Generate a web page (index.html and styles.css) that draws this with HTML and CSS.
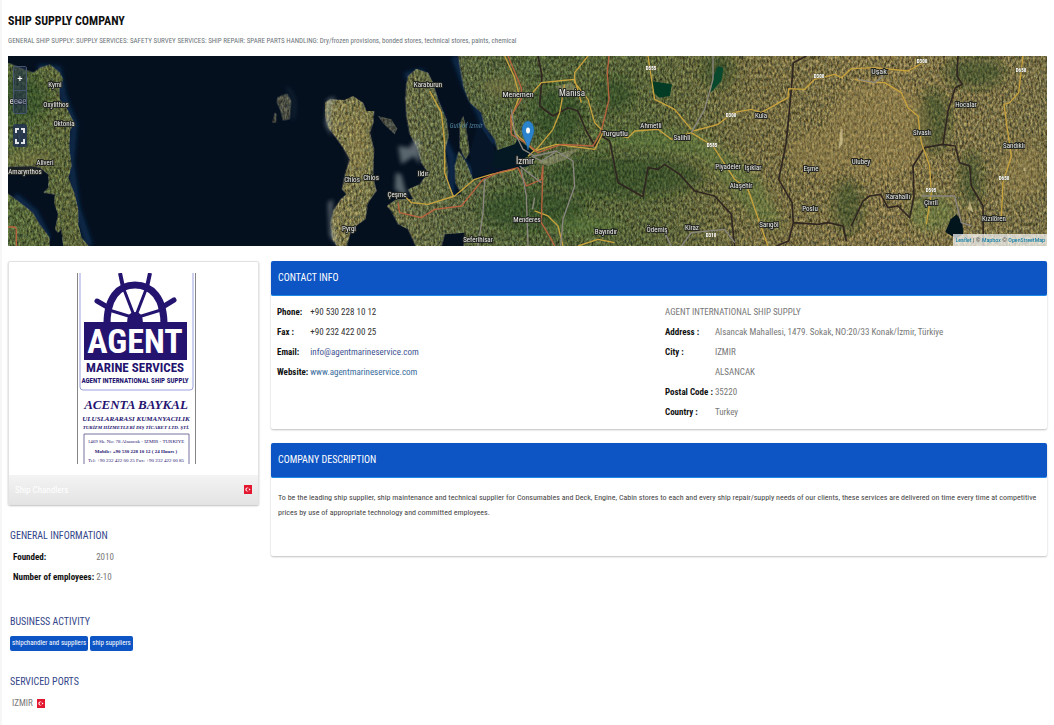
FILE: index.html
```html
<!DOCTYPE html>
<html lang="en">
<head>
<meta charset="utf-8">
<title>Ship Supply Company</title>
<link rel="stylesheet" href="styles.css">
</head>
<body>
<main class="page">
  <header class="intro">
    <h1 class="title">SHIP SUPPLY COMPANY</h1>
    <p class="subtitle">GENERAL SHIP SUPPLY: SUPPLY SERVICES: SAFETY SURVEY SERVICES: SHIP REPAIR: SPARE PARTS HANDLING: Dry/frozen provisions, bonded stores, technical stores, paints, chemical</p>
  </header>

  <section class="map" aria-label="Map">
    <svg class="map-art" viewBox="0 0 1039 190" preserveAspectRatio="xMidYMid slice">
      <defs>
        <linearGradient id="land" gradientUnits="userSpaceOnUse" x1="0" y1="0" x2="3117" y2="0">
          <stop offset="0" stop-color="#4f6139"/><stop offset=".1" stop-color="#5c603b"/>
          <stop offset=".32" stop-color="#77734c"/><stop offset=".42" stop-color="#566040"/>
          <stop offset=".5" stop-color="#4c5c38"/><stop offset=".62" stop-color="#545e39"/>
          <stop offset=".72" stop-color="#6d6742"/><stop offset=".85" stop-color="#786d47"/><stop offset="1" stop-color="#6e6845"/>
        </linearGradient>
        <filter id="terrain" x="0" y="0" width="100%" height="100%" color-interpolation-filters="sRGB">
          <feTurbulence type="fractalNoise" baseFrequency=".16 .09" numOctaves="4" seed="8" result="n"/>
          <feColorMatrix in="n" values=".8 .3 0 0 -.02  .8 .15 0 0 .05  .8 0 .2 0 0  0 0 0 0 1" result="g"/>
          <feBlend in="g" in2="SourceGraphic" mode="overlay" result="b"/>
          <feComposite in="b" in2="SourceAlpha" operator="in"/>
        </filter>
        <filter id="soft" x="-30%" y="-30%" width="160%" height="160%"><feGaussianBlur stdDeviation="14"/></filter>
        <filter id="haze" x="-30%" y="-30%" width="160%" height="160%"><feGaussianBlur stdDeviation="6"/></filter>
      </defs>
      <rect width="1039" height="190" fill="#05101f"/>
      <g transform="scale(.33333)">
        <!-- shallow water -->
        <g fill="none" stroke="#0a2a4c" stroke-width="20" filter="url(#haze)">
          <path d="M90 35 L150 40 L165 120 L198 205 L188 320 L205 450 L245 570M20 420L80 470L120 550"/>
          <path d="M1340 0L1370 80L1420 180L1440 250L1530 270M1290 220L1330 300L1330 420M1350 300L1400 360M1190 60L1240 50L1310 210"/>
        </g>
        <g filter="url(#terrain)" fill="url(#land)">
          <path d="M0 20L36 35L76 50L96 35L126 25L156 50L166 70L154 95L156 130L181 165L198 200L186 225L184 275L191 330L181 365L201 415L211 465L211 505L221 545L246 575L166 575L160 520L150 530L141 520L150 475L138 440L141 415L106 410L121 395L121 355L96 335L70 330L0 333Z"/>
          <path d="M0 413L30 435L75 470L92 500L125 545L125 575L0 575Z"/>
          <path opacity=".6" d="M808 125L820 118L838 113L850 135L845 190L825 193L816 160L806 140ZM800 170L806 175L803 200L793 200Z"/>
          <path d="M950 140L966 130L1010 132L1035 120L1065 140L1075 165L1098 165L1096 200L1085 230L1098 280L1095 360L1105 405L1080 440L1072 490L1030 520L1015 575L990 575L972 550L967 500L975 465L998 430L1015 415L1002 400L1012 350L1025 310L1005 275L980 240L960 215L950 175Z"/>
          <path opacity=".6" d="M1110 180L1150 190L1168 218L1160 235L1128 205Z"/>
          <path d="M1195 85L1200 60L1225 38L1260 50L1275 80L1290 130L1315 190L1322 240L1310 285L1320 340L1318 380L1338 420L1360 415L1342 380L1340 330L1352 285L1375 320L1395 370L1430 370L1480 345L1550 333L1510 310L1470 290L1460 250L1430 210L1420 170L1385 140L1367 95L1355 30L1350 0L3140 0L3140 590L1365 590L1370 530L1310 535L1300 575L1225 575L1200 520L1170 505L1150 465L1136 450L1165 430L1215 430L1200 400L1235 385L1260 350L1240 320L1225 270L1205 235L1195 180L1192 130Z"/>
          <path d="M1355 210L1365 180L1373 210L1385 290L1372 310L1355 275Z"/>
        </g>
        <!-- inner bay -->
        <path d="M1395 365L1385 290L1410 200L1450 260L1465 290L1520 285L1555 270L1545 325L1485 342Z" fill="#061527"/>
        <path d="M1460 285L1520 265L1530 250L1575 285L1550 255L1585 285L1545 310L1565 330L1500 340L1450 330Z" fill="#031823"/>
        <!-- woods and dry ground -->
        <g filter="url(#soft)">
          <g fill="#203f1c" opacity=".4">
            <ellipse cx="1570" cy="460" rx="160" ry="60"/><ellipse cx="1650" cy="175" rx="75" ry="85"/><ellipse cx="1820" cy="115" rx="55" ry="50"/>
            <ellipse cx="1850" cy="360" rx="240" ry="60"/><ellipse cx="2900" cy="50" rx="90" ry="45"/><ellipse cx="2775" cy="195" rx="50" ry="95"/>
            <ellipse cx="2890" cy="370" rx="32" ry="85"/><ellipse cx="2520" cy="450" rx="45" ry="80"/><ellipse cx="40" cy="130" rx="80" ry="70"/><ellipse cx="2130" cy="40" rx="45" ry="55"/>
          </g>
          <g fill="#57823c" opacity=".36">
            <path d="M1760 220L2060 225L2250 360L2330 520L2240 490L2080 300L1760 260Z"/><ellipse cx="1730" cy="510" rx="110" ry="25"/><ellipse cx="2770" cy="470" rx="70" ry="55"/>
          </g>
          <g fill="#a28a50" opacity=".3">
            <ellipse cx="2610" cy="220" rx="150" ry="145"/><ellipse cx="2430" cy="290" rx="90" ry="70"/><ellipse cx="3040" cy="340" rx="65" ry="90"/><ellipse cx="60" cy="310" rx="80" ry="25"/><ellipse cx="1050" cy="260" rx="25" ry="90"/><ellipse cx="1490" cy="95" rx="65" ry="28"/>
          </g>
        </g>
        <!-- cloud banks and lakes -->
        <g fill="#a1adae" opacity=".55" filter="url(#haze)">
          <path d="M958 130L982 122L966 160L970 240L952 205ZM960 440L974 430L972 510L990 570L965 540ZM1163 350L1180 355L1198 425L1160 400ZM1170 270L1205 275L1220 250L1235 255L1235 325L1218 300L1180 325Z"/>
          <path d="M836 95Q870 120 855 190" fill="none" stroke="#33556b" stroke-width="5"/>
        </g>
        <path d="M1928 75L1992 85L1985 120L1955 125L1936 110Z" fill="#033b25"/>
        <path d="M2130 30L2146 35L2140 75L2108 110L2116 60Z" fill="#08492e"/>
        <path d="M2846 475L2863 500L2866 535L2845 548L2812 528L2828 490Z" fill="#02141c"/>
        <path d="M2492 280l6-60 6 0v42zM2885 435l12 35-18-12zM3046 335h6v10h-6z" fill="#d4c693" opacity=".75"/>
        <path d="M1640 90l50-8 20 20-45 12zM1590 320l55-25 70-20-40 35-55 20z" fill="#aaa386" opacity=".45"/>
        <!-- borders -->
        <g fill="none" stroke="#302621" stroke-width="5" stroke-linejoin="round">
          <path d="M1590 0L1602 60L1595 150L1635 180L1680 155L1710 165L1735 225L1760 270L1780 240L1805 255L1830 380L1905 422L1920 335L1950 340L1970 325L2015 355L2060 405L2120 420L2170 475L2180 570"/>
          <path d="M2395 0L2356 20L2350 100L2335 260L2312 370L2352 440L2356 500L2342 555L2305 570M2356 500L2430 505L2460 500L2505 510L2515 555M2530 510L2565 435L2585 420L2618 415L2640 455L2670 450L2705 485L2718 420L2715 330L2750 275L2805 265L2842 270L2855 320L2885 330L2890 390L2925 450L2926 570M2850 0L2847 60L2863 85L2842 95L2820 165L2805 265"/>
        </g>
        <!-- roads -->
        <g fill="none" stroke="#c9a33d" stroke-width="4" stroke-linejoin="round">
          <path d="M1490 0L1518 60L1535 120L1508 190L1525 235L1580 285L1645 265L1760 280L1785 230L1860 245L1880 225L1950 220L1990 250L2050 230L2115 270L2180 370L2220 400L2255 500L2280 570M1565 120L1600 80L1650 75L1700 70L1720 140M1670 85L1655 170L1635 220L1590 275L1560 300M1740 0L1700 50L1700 80L1740 130L1760 200L1785 225M1920 0L1940 130L2000 160L2050 220M2056 225L2130 205L2175 170L2230 160L2260 170L2340 125L2342 98L2390 100L2420 70L2480 55L2500 65L2530 38L2600 35L2700 45L2745 20M2540 70L2590 80L2630 80L2680 110L2700 155L2730 180L2740 260L2765 330L2770 410L2755 505M3045 0L3032 110L3005 140L2988 145L2998 220L3010 300L2985 380L2980 490M1180 410L1210 440L1260 445L1340 420L1400 370L1450 355L1520 340M1265 105L1300 170L1310 260L1310 350L1335 420M1580 465L1620 480L1650 510L1665 570M1710 570L1770 550L1820 560"/>
        </g>
        <g fill="none" stroke="#b9623f" stroke-width="4" stroke-linejoin="round">
          <path d="M1500 0L1540 95L1540 130L1508 180L1510 235L1560 265L1590 290L1660 265L1755 270L1780 225L1803 130L1798 50L1803 0M1170 440L1175 470L1240 485L1280 460L1360 450L1425 370L1470 350L1530 335L1555 390L1600 370L1605 330L1600 500L1630 550L1640 570M0 513H18Q25 513 25 525V570"/>
        </g>
        <g fill="none" stroke="#8b8781" stroke-width="4" stroke-linejoin="round">
          <path d="M1510 160L1520 230L1545 280L1580 300L1645 285L1695 315L1700 390L1665 490L1658 570M1540 340L1555 420L1560 570M1535 330L1600 380M1430 370L1425 470L1410 570M1570 300L1600 315L1640 290M1970 530L1990 570M2020 570L2050 530L2150 520L2180 560M2050 230L2090 160L2115 70L2115 0M2550 70L2600 80L2625 60M2740 420L2840 420L2860 500L2890 510M1580 425L1573 460"/>
        </g>
      </g>
      <g class="places">
        <text x="47" y="31">Kymi</text><text x="48" y="51">Oxylithos</text><text x="56" y="70">Oktonia</text><text x="37" y="109">Aliveri</text><text x="17" y="118">Amarynthos</text><text x="10" y="48" class="big">eece</text>
        <text x="344" y="126">Chios</text><text x="363" y="124">Chios</text><text x="341" y="175">Pyrgi</text>
        <text x="420" y="31">Karaburun</text><text x="458" y="72" class="sea">Gulf of Izmir</text><text x="415" y="120">Ildır</text><text x="389" y="141">Çeşme</text><text x="470" y="186">Seferihisar</text>
        <text x="510" y="41" class="mid">Menemen</text><text x="564" y="40" class="big">Manisa</text><text x="517" y="108" class="big">İzmir</text><text x="519" y="166">Menderes</text><text x="607" y="80" class="mid">Turgutlu</text><text x="643" y="72">Ahmetli</text><text x="674" y="84">Salihli</text>
        <text x="598" y="178">Bayındır</text><text x="649" y="176">Ödemiş</text><text x="684" y="174">Kiraz</text><text x="753" y="62">Kula</text><text x="720" y="113">Piyadeler</text><text x="745" y="114">Işıklar</text><text x="733" y="132">Alaşehir</text><text x="761" y="171">Sarıgöl</text>
        <text x="803" y="115">Eşme</text><text x="802" y="155">Poslu</text><text x="853" y="108">Ulubey</text><text x="871" y="18" class="mid">Uşak</text><text x="914" y="79">Sivaslı</text><text x="890" y="143">Karahallı</text><text x="923" y="149">Çivril</text><text x="958" y="51">Hocalar</text><text x="1006" y="92">Sandıklı</text><text x="986" y="165">Kızılören</text>
      </g>
      <g class="roads">
        <text x="643" y="14">D555</text><text x="704" y="91">D585</text><text x="723" y="61">D300</text><text x="811" y="22">D300</text><text x="914" y="7">D300</text><text x="1013" y="16">D650</text><text x="996" y="124">D650</text><text x="923" y="136">D595</text><text x="703" y="181">D310</text>
      </g>
      <path d="M520 94C518 84 514 80 514 74a6 9 0 0 1 12 0c0 6-4 10-6 20z" fill="#2b83cb" stroke="#246ba8" stroke-width=".5"/>
      <ellipse cx="520" cy="74.500" rx="2" ry="3" fill="#fff"/>
    </svg>
    <div class="map-tools">
      <div class="zoom"><button class="tool" aria-label="Zoom in">+</button><button class="tool" aria-label="Zoom out">−</button></div>
      <button class="tool full" aria-label="Full screen"><svg width="10" height="16" viewBox="0 0 10 16" fill="none" stroke="#e2e5ea" stroke-width="2"><path d="M1 5V1H4M6 1H9V5M9 11V15H6M4 15H1V11"/></svg></button>
    </div>
    <div class="credit"><a href="#">Leaflet</a> | © <a href="#">Mapbox</a> © <a href="#">OpenStreetMap</a></div>
  </section>

  <div class="columns">
    <aside class="side">
      <div class="card">
        <svg class="logo" viewBox="0 0 120 191" role="img" aria-label="Agent Marine Services">
          <path d="M.5 0V191M118.500 0V191" stroke="#858585"/>
          <path d="M3 0V114Q3 117 6 117H113Q116 117 116 114V0" fill="none" stroke="#9aa0dc"/>
          <g fill="none" stroke="#24136f">
            <path d="M30 55C29 24 42 12 58 12S88 24 87 55" stroke-width="7"/>
            <path d="M46 14L43 0M70 14L73 0" stroke-width="4"/>
            <path d="M32 35L20 28M84 35L97 27" stroke-width="5" stroke-linecap="round"/>
            <path d="M58 45L32 37M58 45L46 14M58 45L70 14M58 45L84 37" stroke-width="3"/>
          </g>
          <path d="M50 50Q50 39 58 39T66 50Z" fill="#24136f"/>
          <rect x="7" y="49" width="103" height="38" fill="#24136f"/>
          <g class="logo-sans">
            <text class="l-agent" x="58" y="80">AGENT</text><text class="l-marine" x="58" y="99">MARINE SERVICES</text><text class="l-intl" x="58" y="110">AGENT INTERNATIONAL SHIP SUPPLY</text>
          </g>
          <g class="logo-serif">
            <text class="l-acenta" x="59" y="136">ACENTA BAYKAL</text><text class="l-ulus" x="59" y="148">ULUSLARARASI KUMANYACILIK</text><text class="l-tur" x="59" y="156">TURİZM HİZMETLERİ DIŞ TİCARET LTD. ŞTİ.</text>
          </g>
          <path d="M7 191V161H112V191" fill="none" stroke="#77729d"/>
          <g class="logo-addr"><text x="59" y="170">1469 Sk. No: 78 Alsancak - IZMIR - TURKIYE</text><text x="59" y="180" class="l-bold">Mobile: +90 530 228 10 12 ( 24 Hours )</text><text x="59" y="189">Tel: +90 232 422 00 25 Fax: +90 232 422 00 85</text></g>
        </svg>
        <div class="card-foot"><span>Ship Chandlers</span>
          <svg class="flag" viewBox="0 0 8 9"><rect width="8" height="9" fill="#e3172f"/><circle cx="3.400" cy="4.500" r="2" fill="#fff"/><circle cx="4" cy="4.500" r="1.500" fill="#e3172f"/><circle cx="5.600" cy="4.500" r=".7" fill="#fff"/></svg>
        </div>
      </div>

      <section class="block general">
        <h2 class="side-title">GENERAL INFORMATION</h2>
        <table class="facts">
          <tr><th scope="row">Founded:</th><td>2010</td></tr>
          <tr><th scope="row">Number of employees:</th><td>2-10</td></tr>
        </table>
      </section>
      <section class="block activity">
        <h2 class="side-title">BUSINESS ACTIVITY</h2>
        <div class="tags"><a class="tag" href="#">shipchandler and suppliers</a><a class="tag" href="#">ship suppliers</a></div>
      </section>
      <section class="block">
        <h2 class="side-title">SERVICED PORTS</h2>
        <div class="port"><span>IZMIR</span>
          <svg class="flag" viewBox="0 0 8 9"><rect width="8" height="9" fill="#e3172f"/><circle cx="3.400" cy="4.500" r="2" fill="#fff"/><circle cx="4" cy="4.500" r="1.500" fill="#e3172f"/><circle cx="5.600" cy="4.500" r=".7" fill="#fff"/></svg>
        </div>
      </section>
    </aside>

    <div class="content">
      <section class="panel">
        <h2 class="panel-title">CONTACT INFO</h2>
        <div class="contact">
          <table class="facts reach">
            <tr><th scope="row">Phone:</th><td>+90 530 228 10 12</td></tr>
            <tr><th scope="row">Fax :</th><td>+90 232 422 00 25</td></tr>
            <tr><th scope="row">Email:</th><td><a href="#">info@agentmarineservice.com</a></td></tr>
            <tr><th scope="row">Website:</th><td><a class="web" href="#">www.agentmarineservice.com</a></td></tr>
          </table>
          <table class="facts place">
            <tr><td colspan="2">AGENT INTERNATIONAL SHIP SUPPLY</td></tr>
            <tr><th scope="row">Address :</th><td>Alsancak Mahallesi, 1479. Sokak, NO:20/33 Konak/İzmir, Türkiye</td></tr>
            <tr><th scope="row">City :</th><td>IZMIR</td></tr>
            <tr><th></th><td>ALSANCAK</td></tr>
            <tr><th scope="row">Postal Code :</th><td>35220</td></tr>
            <tr><th scope="row">Country :</th><td>Turkey</td></tr>
          </table>
        </div>
      </section>
      <section class="panel">
        <h2 class="panel-title">COMPANY DESCRIPTION</h2>
        <p class="description">To be the leading ship supplier, ship maintenance and technical supplier for Consumables and Deck, Engine, Cabin stores to each and every ship repair/supply needs of our clients, these services are delivered on time every time at competitive prices by use of appropriate technology and committed employees.</p>
      </section>
    </div>
  </div>
</main>
</body>
</html>
```
FILE: styles.css
```css
* { box-sizing: border-box; }
body {
  margin: 0;
  background: #fff;
  color: #777;
  font-family: "Roboto Condensed", "Liberation Sans Narrow", "Liberation Sans", Arial, sans-serif;
  font-size: 9px;
  line-height: 20px;
}
h1, h2, p { margin: 0; }
a { text-decoration: none; }

.page {
  min-height: 100vh;
  border-left: 2px solid #f6f6f6;
  padding: 10px 7px 8px 6px;
}
.title { color: #111; font-size: 12px; line-height: 22px; font-weight: 700; }
.subtitle { color: #6c7479; font-size: 7px; line-height: 18px; }

.map {
  position: relative;
  height: 190px;
  margin-top: 6px;
  overflow: hidden;
  background: #05101f;
}
.map-art { display: block; width: 100%; height: 100%; }
.places text {
  fill: #e8e8e4;
  stroke: #252723;
  stroke-width: 2px;
  paint-order: stroke;
  font-size: 7px;
  text-anchor: middle;
}
.places .mid { font-size: 8px; }
.places .big { font-size: 9px; }
.places .sea { fill: #4e7f98; stroke: none; font-style: italic; }
.roads text {
  fill: #fff;
  stroke: #6c6845;
  stroke-width: 1px;
  paint-order: stroke;
  font-size: 5px;
  font-weight: 700;
  text-anchor: middle;
}
.map-tools {
  position: absolute;
  top: 10px;
  left: 5px;
  display: grid;
  gap: 10px;
}
.zoom { display: grid; border: 1px solid #46566e; border-radius: 2px; }
.tool {
  display: grid;
  place-items: center;
  width: 12px;
  height: 23px;
  padding: 0;
  border: 0;
  background: rgba(31, 48, 82, .5);
  color: #fff;
  font: 700 9px "Liberation Sans", Arial, sans-serif;
}
.tool + .tool { border-top: 1px solid #46566e; color: #9ba6c0; }
.full { width: 14px; border-radius: 2px; background: rgba(31, 48, 82, .8); }
.credit {
  position: absolute;
  right: 0;
  bottom: 0;
  padding: 0 2px;
  background: rgba(255, 255, 255, .7);
  color: #444;
  font-size: 6px;
  line-height: 12px;
}
.credit a { color: #0078a8; }

.columns {
  display: grid;
  grid-template-columns: 251fr 776fr;
  gap: 12px;
  margin-top: 15px;
  align-items: start;
}
.card {
  border: 1px solid #e2e2e2;
  border-radius: 2px;
  box-shadow: 0 1px 2px rgba(0, 0, 0, .25);
}
.logo { display: block; width: 120px; margin: 11px auto 11px 68px; }
.card-foot {
  display: flex;
  align-items: center;
  justify-content: space-between;
  height: 29px;
  padding: 0 6px;
  background: linear-gradient(#f3f3f3, #e4e4e4);
  color: #fff;
}
.flag { width: 8px; height: 9px; }
.logo text { fill: #24136f; text-anchor: middle; }
.logo-sans { font-weight: 700; }
.logo .l-agent { fill: #fff; font-size: 34px; }
.l-marine { font-size: 13px; }
.l-intl { font-size: 7px; }
.logo-serif { font-family: "Liberation Serif", serif; font-weight: 700; font-style: italic; }
.l-acenta { font-size: 13px; }
.l-ulus { font-size: 7px; }
.l-tur { font-size: 5px; }
.logo-addr { font-family: "Liberation Serif", serif; font-size: 5px; }
.l-bold { font-weight: 700; }

.block { padding: 0 2px; }
.general { padding-top: 20px; }
.side-title { color: #34468a; font-size: 10px; line-height: 22px; font-weight: 400; }
.facts { border-collapse: collapse; }
.facts th, .facts td { padding: 0; text-align: left; white-space: nowrap; }
.facts th { padding-right: 2px; color: #111; font-weight: 700; }
.general .facts { margin-left: 3px; }
.activity { margin: 24px 0 20px; }
.tags { display: flex; gap: 2px; padding-top: 3px; }
.tag {
  padding: 0 2px;
  border-radius: 2px;
  background: #0d54c4;
  color: #fff;
  font-size: 7px;
  line-height: 15px;
}
.port { display: flex; align-items: center; gap: 4px; padding-left: 2px; }

.content { display: grid; gap: 14px; }
.panel {
  border-radius: 2px;
  box-shadow: 0 1px 2px rgba(0, 0, 0, .25);
}
.panel-title {
  padding: 0 7px;
  border-bottom: 1px solid #2089e6;
  border-radius: 2px;
  background: #0d54c4;
  color: #fff;
  font-size: 10px;
  line-height: 34px;
  font-weight: 400;
}
.contact {
  display: grid;
  grid-template-columns: 1fr 1fr;
  align-items: start;
  justify-items: start;
  padding: 6px 0 7px;
}
.contact .facts { margin-left: 6px; }
.reach td { color: #333; }
.reach a { color: #3d5291; }
.reach .web { color: #376a9c; }
.description { padding: 12px 6px 36px 7px; color: #444; font-size: 8px; line-height: 15px; }
```
